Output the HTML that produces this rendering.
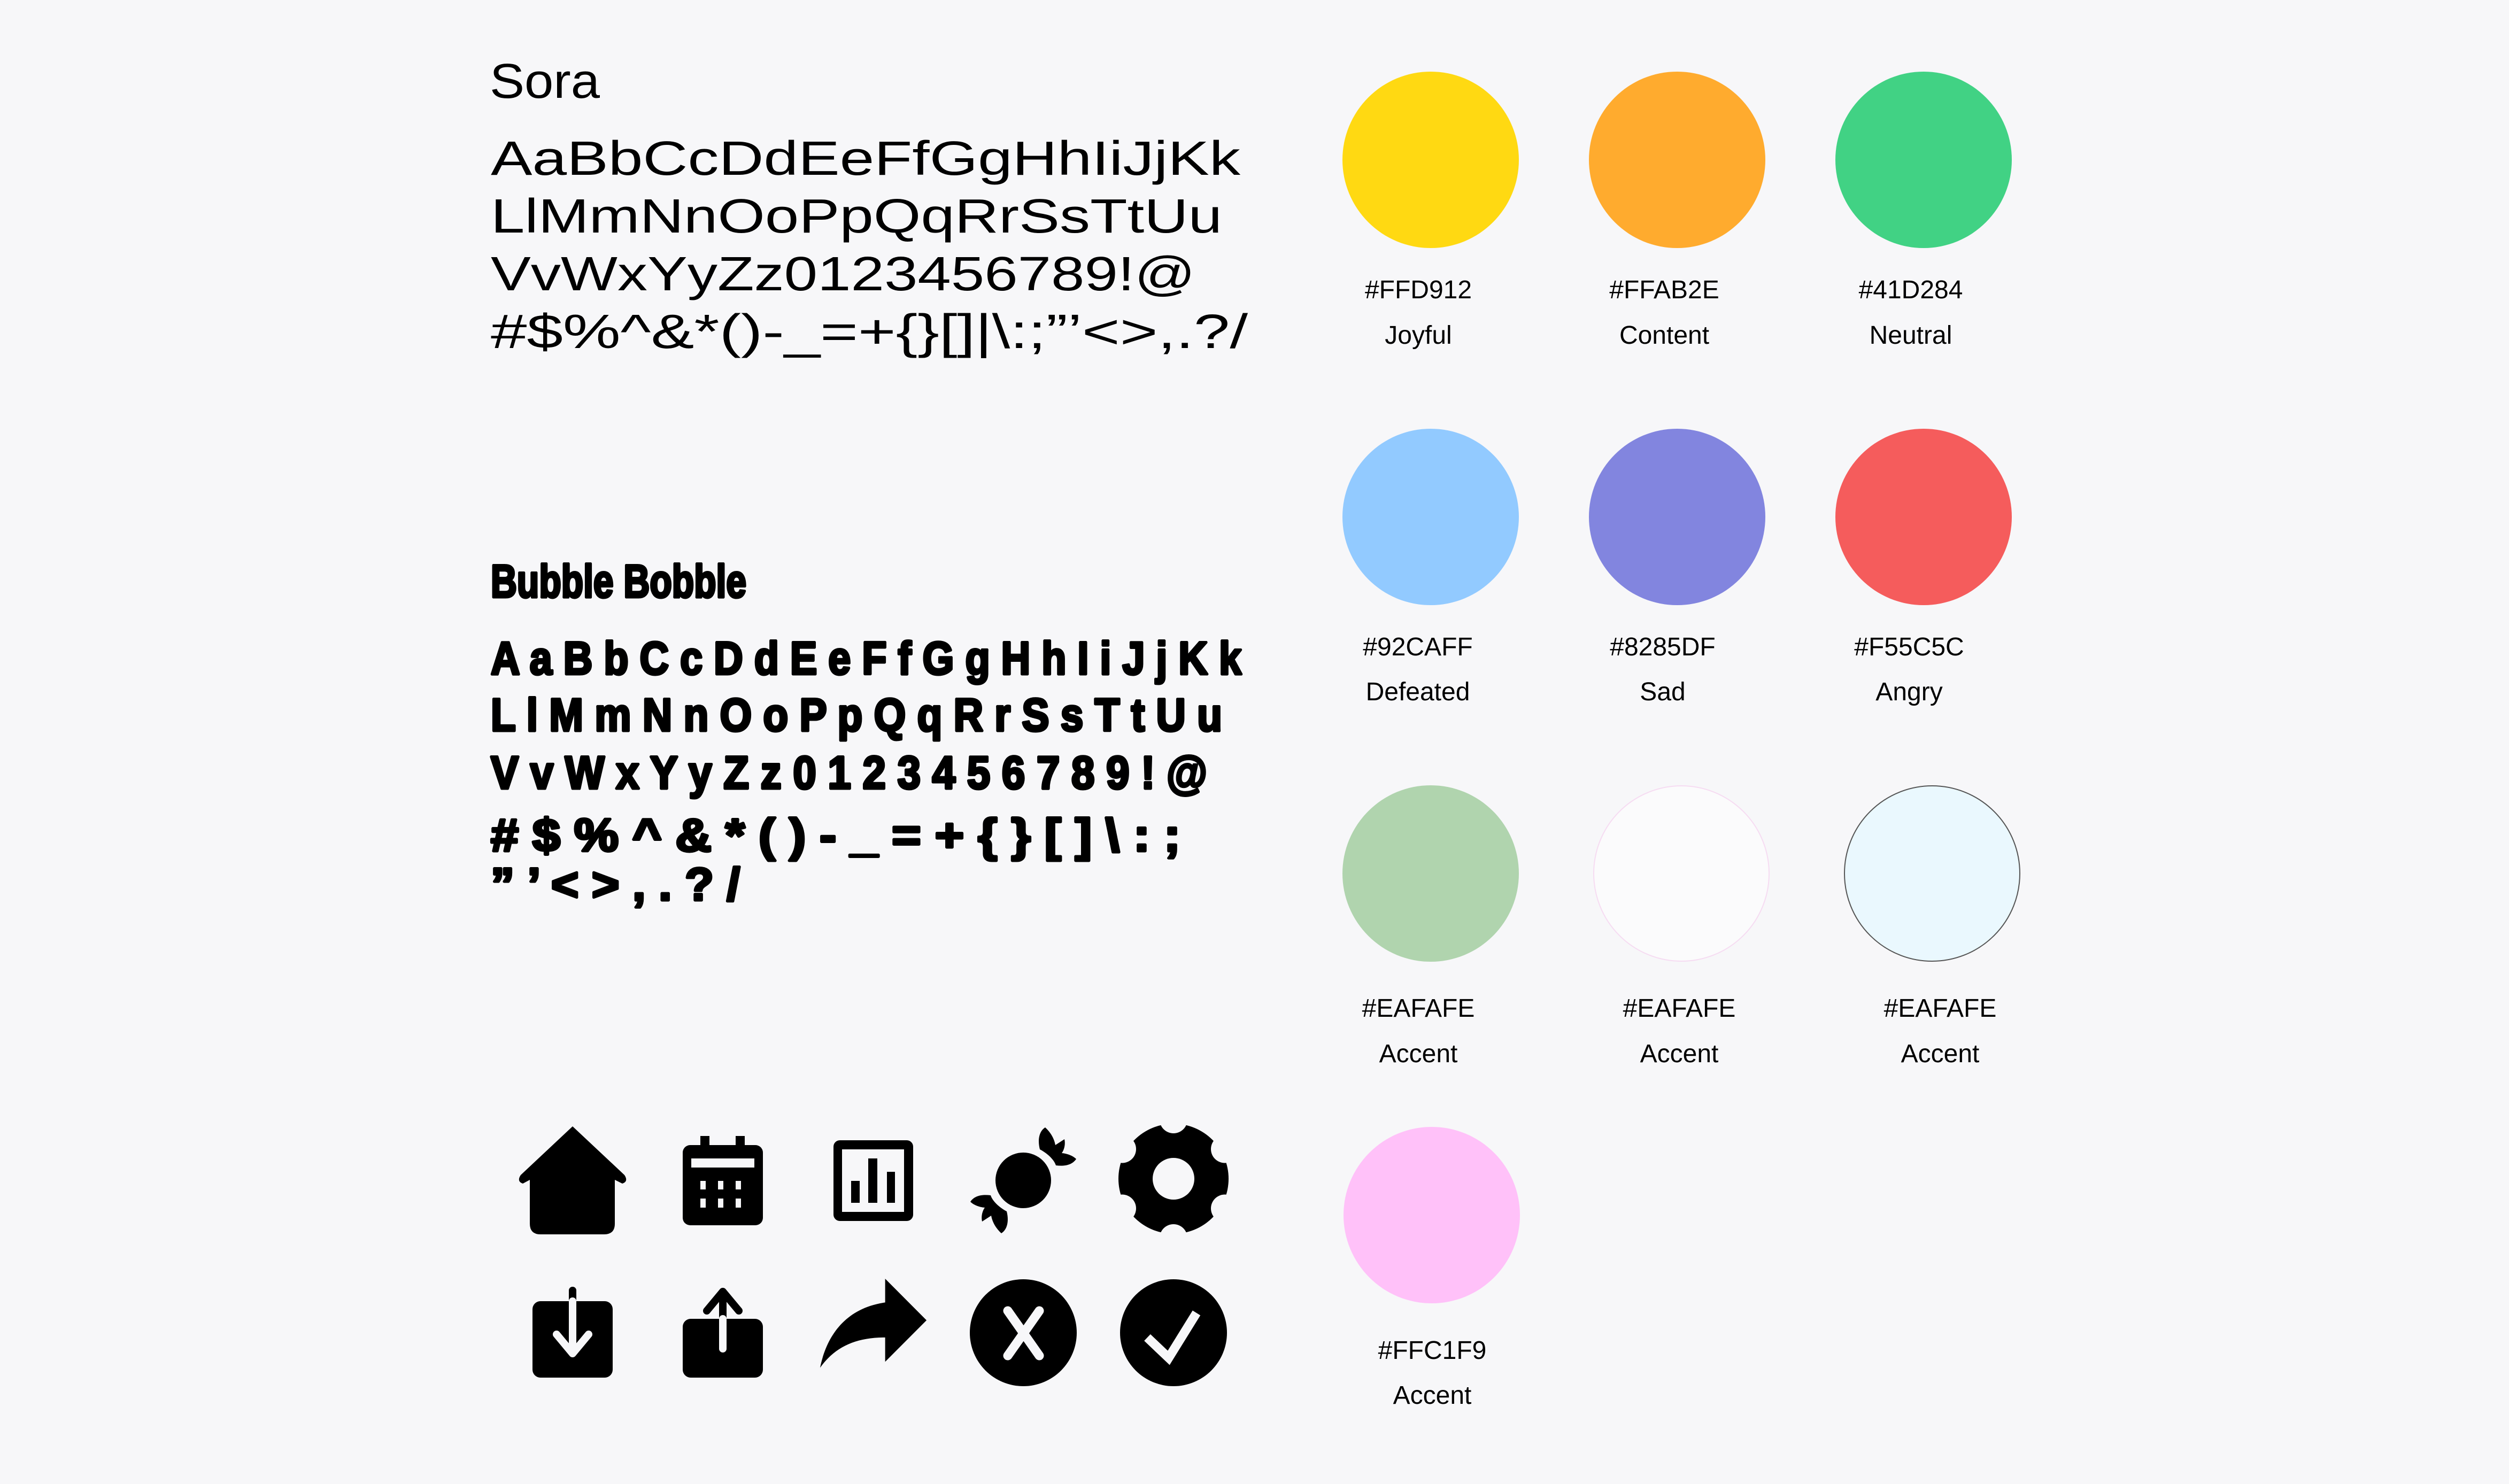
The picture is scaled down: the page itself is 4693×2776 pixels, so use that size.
<!DOCTYPE html>
<html><head><meta charset="utf-8"><style>
html,body{margin:0;padding:0;background:#f7f7f9;}
svg{display:block}
</style></head><body>
<svg width="4693" height="2776" viewBox="0 0 4693 2776" xmlns="http://www.w3.org/2000/svg">
<rect width="4693" height="2776" fill="#f7f7f9"/>
<g font-family="'Liberation Sans', sans-serif" fill="#000">
<text x="916" y="183" font-size="92" textLength="206" lengthAdjust="spacingAndGlyphs">Sora</text>
<g font-size="90">
<text x="918" y="327" textLength="1402" lengthAdjust="spacingAndGlyphs">AaBbCcDdEeFfGgHhIiJjKk</text>
<text x="918" y="435" textLength="1368" lengthAdjust="spacingAndGlyphs">LlMmNnOoPpQqRrSsTtUu</text>
<text x="918" y="543" textLength="1318" lengthAdjust="spacingAndGlyphs">VvWxYyZz0123456789!@</text>
<text x="918" y="651" textLength="1416" lengthAdjust="spacingAndGlyphs">#$%^&amp;*()-_=+{}[]|\:;”’&lt;&gt;,.?/</text>
</g>
<g font-weight="bold" stroke="#000" stroke-width="5" stroke-linejoin="round">
<text x="918" y="1117" font-size="86" textLength="478" lengthAdjust="spacingAndGlyphs">Bubble Bobble</text>
<g font-size="86">
<text x="918" y="1261" textLength="1404" lengthAdjust="spacingAndGlyphs">A a B b C c D d E e F f G g H h I i J j K k</text>
<text x="918" y="1367" textLength="1368" lengthAdjust="spacingAndGlyphs">L l M m N n O o P p Q q R r S s T t U u</text>
<text x="918" y="1475" textLength="1340" lengthAdjust="spacingAndGlyphs">V v W x Y y Z z 0 1 2 3 4 5 6 7 8 9 ! @</text>
<text x="918" y="1592" textLength="1290" lengthAdjust="spacingAndGlyphs"># $ % ^ &amp; * ( ) - _ = + { } [ ] \ : ;</text>
<text x="918" y="1684" textLength="466" lengthAdjust="spacingAndGlyphs">” ’ &lt; &gt; , . ? /</text>
</g>
</g>
</g>

<!-- color circles -->
<circle cx="2676" cy="299" r="165" fill="#FFD912"/>
<circle cx="3137" cy="299" r="165" fill="#FFAB2E"/>
<circle cx="3598" cy="299" r="165" fill="#41D284"/>
<circle cx="2676" cy="967" r="165" fill="#92CAFF"/>
<circle cx="3137" cy="967" r="165" fill="#8285DF"/>
<circle cx="3598" cy="967" r="165" fill="#F55C5C"/>
<circle cx="2676" cy="1634" r="165" fill="#B0D4AE"/>
<circle cx="3145" cy="1634" r="164" fill="#fbfbfc" stroke="#f6dcf2" stroke-width="2"/>
<circle cx="3614" cy="1634" r="164" fill="#EAF8FE" stroke="#555" stroke-width="2"/>
<circle cx="2678" cy="2273" r="165" fill="#FFC1F9"/>

<g font-family="'Liberation Sans', sans-serif" font-size="48" fill="#000" text-anchor="middle">
<text x="2653" y="558">#FFD912</text><text x="2653" y="643">Joyful</text>
<text x="3113" y="558">#FFAB2E</text><text x="3113" y="643">Content</text>
<text x="3574" y="558">#41D284</text><text x="3574" y="643">Neutral</text>
<text x="2652" y="1226">#92CAFF</text><text x="2652" y="1310">Defeated</text>
<text x="3110" y="1226">#8285DF</text><text x="3110" y="1310">Sad</text>
<text x="3571" y="1226">#F55C5C</text><text x="3571" y="1310">Angry</text>
<text x="2653" y="1902">#EAFAFE</text><text x="2653" y="1987">Accent</text>
<text x="3141" y="1902">#EAFAFE</text><text x="3141" y="1987">Accent</text>
<text x="3629" y="1902">#EAFAFE</text><text x="3629" y="1987">Accent</text>
<text x="2679" y="2542">#FFC1F9</text><text x="2679" y="2626">Accent</text>
</g>

<!-- icons row 1 -->
<!-- home -->
<path d="M1071 2107 L1168 2198 Q1176 2210 1164 2214 L1150 2207 L1150 2289 Q1150 2309 1130 2309 L1011 2309 Q991 2309 991 2289 L991 2207 L978 2214 Q966 2210 974 2198 Z" fill="#000"/>
<!-- calendar -->
<rect x="1310" y="2125" width="17" height="25" fill="#000"/>
<rect x="1376" y="2125" width="17" height="25" fill="#000"/>
<rect x="1277" y="2142" width="150" height="150" rx="14" fill="#000"/>
<rect x="1293" y="2167" width="118" height="17" fill="#f7f7f9"/>
<g fill="#f7f7f9">
<rect x="1310" y="2209" width="10" height="16"/><rect x="1343" y="2209" width="10" height="16"/><rect x="1376" y="2209" width="10" height="16"/>
<rect x="1310" y="2242" width="10" height="17"/><rect x="1343" y="2242" width="10" height="17"/><rect x="1376" y="2242" width="10" height="17"/>
</g>
<!-- chart -->
<rect x="1559" y="2133" width="149" height="151" rx="12" fill="#000"/>
<rect x="1575" y="2150" width="116" height="117" fill="#f7f7f9"/>
<rect x="1592" y="2209" width="16" height="41" fill="#000"/>
<rect x="1624" y="2167" width="17" height="83" fill="#000"/>
<rect x="1659" y="2192" width="15" height="58" fill="#000"/>
<!-- candy -->
<circle cx="1914" cy="2208" r="52" fill="#000"/>
<path id="wrap" d="M1945 2150 C1940 2130 1945 2115 1955 2109 C1965 2118 1972 2130 1974 2142 L1991 2131 C1993 2140 1991 2150 1986 2157 C1998 2158 2008 2163 2013 2168 C2005 2180 1990 2182 1975 2180 C1972 2170 1960 2158 1945 2150 Z" fill="#000"/>
<use href="#wrap" transform="rotate(180 1914 2208)"/>
<!-- gear -->
<circle cx="2195" cy="2205" r="103" fill="#000"/>
<g fill="#f7f7f9">
<circle cx="2195" cy="2094" r="26"/>
<circle cx="2195" cy="2316" r="26"/>
<circle cx="2291" cy="2149.5" r="26"/>
<circle cx="2291" cy="2260.5" r="26"/>
<circle cx="2099" cy="2149.5" r="26"/>
<circle cx="2099" cy="2260.5" r="26"/>
<circle cx="2195" cy="2205" r="39"/>
</g>

<!-- icons row 2 -->
<!-- download -->
<rect x="996" y="2434" width="150" height="143" rx="15" fill="#000"/>
<line x1="1071" y1="2414" x2="1071" y2="2436" stroke="#000" stroke-width="14" stroke-linecap="round"/>
<g stroke="#f7f7f9" stroke-width="14" stroke-linecap="round" stroke-linejoin="round" fill="none">
<line x1="1071" y1="2434" x2="1071" y2="2530"/>
<polyline points="1041,2496 1071,2532 1101,2496"/>
</g>
<!-- upload -->
<rect x="1277" y="2467" width="150" height="110" rx="15" fill="#000"/>
<g stroke="#000" stroke-width="14" stroke-linecap="round" stroke-linejoin="round" fill="none">
<line x1="1352" y1="2418" x2="1352" y2="2468"/>
<polyline points="1322,2452 1352,2416 1382,2452"/>
</g>
<line x1="1352" y1="2467" x2="1352" y2="2523" stroke="#f7f7f9" stroke-width="14" stroke-linecap="round"/>
<!-- share -->
<path transform="translate(1500.8 2336.5) scale(11.06 11.1)" d="M14 9V5l7 7-7 7v-4.1c-5 0-8.5 1.6-11 5.1 1-5 4-10 11-11z" fill="#000"/>
<!-- x circle -->
<circle cx="1914" cy="2493" r="100" fill="#000"/>
<g stroke="#f7f7f9" stroke-width="17" stroke-linecap="round">
<line x1="1885" y1="2452" x2="1944" y2="2536"/>
<line x1="1944" y1="2452" x2="1885" y2="2536"/>
</g>
<!-- check circle -->
<circle cx="2195" cy="2493" r="100" fill="#000"/>
<polyline points="2146,2502 2186,2540 2238,2456" fill="none" stroke="#f7f7f9" stroke-width="17"/>
</svg>
</body></html>
